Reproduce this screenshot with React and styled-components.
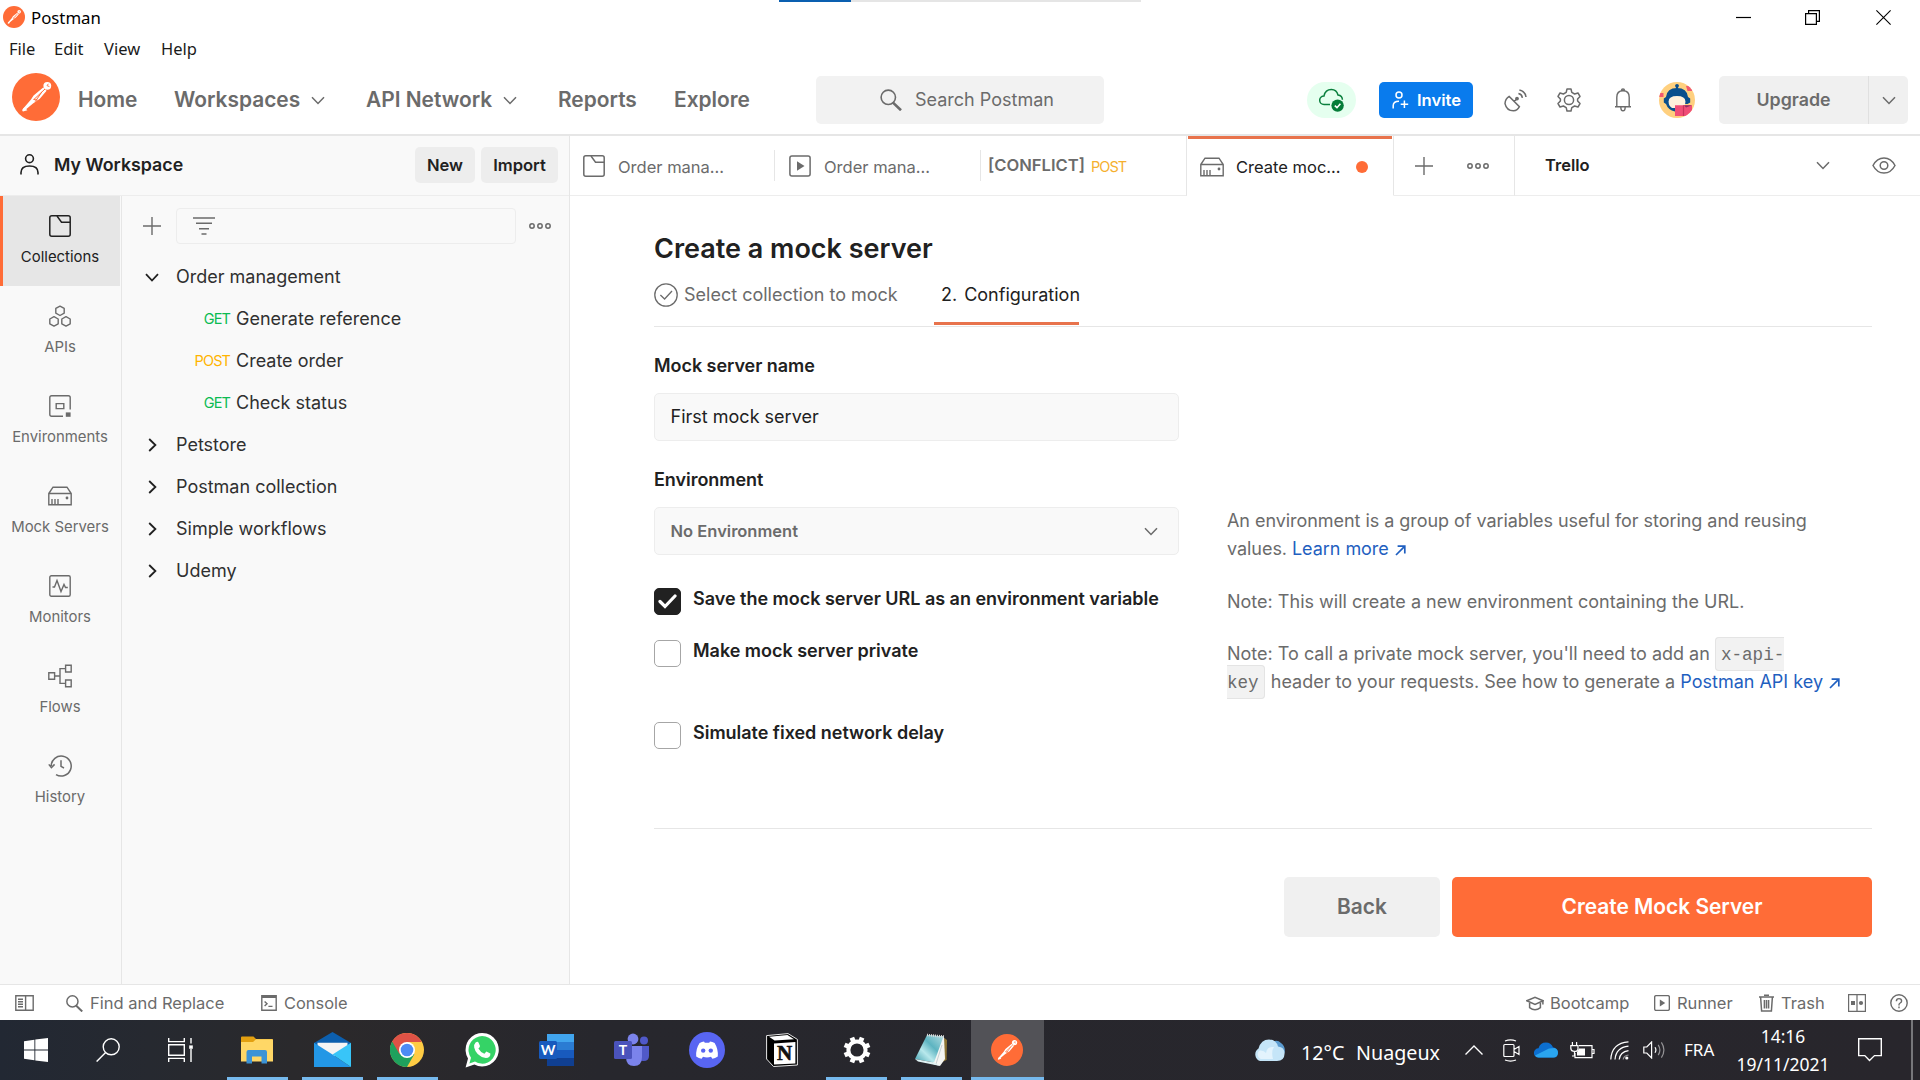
import React from "react";
import styled, { createGlobalStyle, css } from "styled-components";

const Global = createGlobalStyle`
  * { box-sizing: border-box; }
  html, body { margin: 0; padding: 0; background: #fff; }
  body { font-family: Inter, "Liberation Sans", sans-serif; color: #212121; overflow: hidden; }
  svg { display: block; flex: none; }
  button { font: inherit; border: 0; padding: 0; margin: 0; color: inherit; }
`;

const system = `"Noto Sans", "Open Sans", sans-serif`;
const gray = "#6b6b6b";
const line = "#ededed";

const Window = styled.div`
  width: 1920px;
  height: 1080px;
  display: flex;
  flex-direction: column;
  background: #fff;
  overflow: hidden;
`;

/* ---------- text ---------- */
const Label = styled.span`
  white-space: pre;
  font-size: ${(p) => p.$size || 18}px;
  font-weight: ${(p) => p.$weight || 400};
  color: ${(p) => p.$color || "inherit"};
  letter-spacing: ${(p) => p.$ls || 0}px;
  line-height: ${(p) => p.$lh || 24}px;
  padding-top: ${(p) => p.$pt || 0}px;
  padding-bottom: ${(p) => p.$pb || 0}px;
  ${(p) => p.$system && css`font-family: ${system};`}
`;

/* ---------- slots ---------- */
const Slot = styled.div`
  display: flex;
  align-items: center;
  flex: none;
  width: ${(p) => p.$w}px;
  height: 100%;
  justify-content: ${(p) => (p.$center ? "center" : "flex-start")};
`;

/* ---------- title bar ---------- */
const LoadBar = styled.div`
  position: absolute;
  top: 0;
  left: 779px;
  width: 362px;
  height: 2px;
  background: linear-gradient(to right, #0a5fb0 72px, #e5e5e5 72px);
`;
const TitleBar = styled.div`
  height: 34px;
  flex: none;
  display: flex;
  align-items: center;
  padding-left: 3px;
  color: #000;
`;
const WindowButtons = styled.div`
  margin-left: auto;
  display: flex;
  width: 211px;
  height: 33px;
  align-items: center;
`;
const MenuBar = styled.div`
  height: 30px;
  flex: none;
  display: flex;
  align-items: center;
  padding-left: 9px;
  color: #1a1a1a;
`;

/* ---------- header ---------- */
const Header = styled.header`
  height: 72px;
  flex: none;
  display: flex;
  align-items: center;
  padding-left: 12px;
  padding-top: 2px;
  border-bottom: 2px solid #e6e6e6;
  color: ${gray};
`;
const LogoBox = styled.div`
  width: 66px;
  padding-bottom: 7px;
  flex: none;
`;
const SearchBox = styled.div`
  width: 288px;
  height: 48px;
  flex: none;
  background: #f2f2f2;
  border-radius: 5px;
  display: flex;
  align-items: center;
  padding-left: 64px;
  gap: 13px;
`;
const SyncPill = styled.div`
  width: 49px;
  height: 36px;
  margin-left: 203px;
  margin-right: 23px;
  border-radius: 18px;
  background: #e5ffef;
  display: flex;
  align-items: center;
  justify-content: center;
  flex: none;
`;
const InviteButton = styled.button`
  width: 94px;
  height: 36px;
  flex: none;
  background: #097bed;
  color: #fff;
  border-radius: 5px;
  display: flex;
  align-items: center;
  padding-left: 13px;
  gap: 8px;
`;
const HeaderIcons = styled.div`
  display: flex;
  align-items: center;
  padding-left: 31px;
  width: 246px;
  flex: none;
`;
const UpgradeButton = styled.div`
  width: 189px;
  height: 48px;
  flex: none;
  display: flex;
  background: #f0f0f0;
  border-radius: 5px;
`;
const UpgradeMain = styled.div`
  width: 150px;
  display: flex;
  align-items: center;
  justify-content: center;
  border-right: 1px solid #e0e0e0;
`;
const UpgradeArrow = styled.div`
  width: 39px;
  display: flex;
  align-items: center;
  justify-content: center;
`;

/* ---------- body ---------- */
const Body = styled.div`
  height: 848px;
  flex: none;
  display: flex;
`;
const Sidebar = styled.aside`
  width: 570px;
  flex: none;
  background: #f9f9f9;
  border-right: 1px solid #e6e6e6;
  display: flex;
  flex-direction: column;
`;
const WorkspaceBar = styled.div`
  height: 60px;
  flex: none;
  display: flex;
  align-items: center;
  padding: 0 11px 2px 20px;
  border-bottom: 1px solid ${line};
`;
const SmallButton = styled.button`
  width: ${(p) => p.$w}px;
  height: 36px;
  margin-left: 6px;
  border-radius: 5px;
  background: #ededed;
`;
const SideColumns = styled.div`
  display: flex;
  flex: 1;
`;
const Rail = styled.nav`
  width: 122px;
  border-right: 1px solid #e6e6e6;
  flex: none;
`;
const RailItem = styled.div`
  height: 90px;
  width: 120px;
  display: flex;
  flex-direction: column;
  align-items: center;
  padding-top: 18px;
  gap: 7px;
  color: ${(p) => (p.$active ? "#212121" : gray)};
  ${(p) => p.$active && css`background: #e6e6e6; box-shadow: inset 3px 0 #ff6c37;`}
`;
const RailGlyph = styled.div`
  height: 24px;
  display: flex;
  align-items: center;
`;
const Explorer = styled.div`
  flex: 1;
  display: flex;
  flex-direction: column;
`;
const FilterRow = styled.div`
  height: 60px;
  display: flex;
  align-items: center;
  padding-left: 21px;
  color: ${gray};
`;
const FilterBox = styled.div`
  width: 340px;
  height: 36px;
  margin-left: 15px;
  margin-right: 13px;
  border: 1px solid ${line};
  border-radius: 4px;
  display: flex;
  align-items: center;
  padding-left: 16px;
`;
const TreeRow = styled.div`
  height: 42px;
  display: flex;
  align-items: center;
  color: #303030;
`;
const TreeToggle = styled.div`
  width: 54px;
  padding-left: ${(p) => (p.$open ? 23 : 26)}px;
  color: #212121;
`;
const Method = styled.div`
  width: 108px;
  margin-right: 6px;
  text-align: right;
  line-height: 20px;
  font-size: 14.5px;
  letter-spacing: -0.9px;
  color: ${(p) => (p.$kind === "GET" ? "#0cbb52" : "#ffb400")};
`;

/* ---------- main ---------- */
const Main = styled.main`
  flex: 1;
  display: flex;
  flex-direction: column;
`;
const Tabs = styled.div`
  height: 60px;
  flex: none;
  display: flex;
  color: ${gray};
`;
const Tab = styled.div`
  width: ${(p) => p.$w}px;
  flex: none;
  display: flex;
  align-items: center;
  padding-left: ${(p) => p.$pl}px;
  gap: ${(p) => p.$gap ?? 13}px;
  border-bottom: 1px solid ${line};
  ${(p) => p.$edge && css`border-right: 1px solid #e6e6e6;`}
  ${(p) => p.$active && css`
    border-bottom-color: #fff;
    background: linear-gradient(#e8734c, #e8734c) 1px 0 / 204px 3px no-repeat;
    color: #212121;
    padding-top: 2px;
  `}
`;
const TabDivider = styled.div`
  width: 1px;
  flex: none;
  border-bottom: 1px solid ${line};
  background: linear-gradient(#fff 14px, #e6e6e6 14px, #e6e6e6 45px, #fff 45px);
`;
const MethodTag = styled.span`
  font-size: 14.5px;
  letter-spacing: -0.9px;
  line-height: 20px;
  padding-top: 3px;
  color: #f5b02e;
`;
const Dot = styled.div`
  width: 12px;
  height: 12px;
  border-radius: 50%;
  background: #ff6c37;
  margin-left: 3px;
`;
const Page = styled.section`
  flex: 1;
  padding: 33px 48px 0 84px;
  display: flex;
  flex-direction: column;
`;
const Title = styled.h1`
  margin: 0;
  height: 39px;
  font-size: 27px;
  font-weight: 600;
  line-height: 40px;
`;
const Steps = styled.div`
  height: 59px;
  flex: none;
  display: flex;
  border-bottom: 1px solid #e6e6e6;
`;
const Step = styled.div`
  height: 57px;
  display: flex;
  gap: ${(p) => p.$gap}px;
  width: ${(p) => p.$w}px;
  padding: 12px 0 15px ${(p) => p.$pl || 0}px;
  color: ${(p) => (p.$active ? "#212121" : gray)};
  align-items: center;
  ${(p) => p.$active && css`border-bottom: 3px solid #e8734c; padding-bottom: 12px;`}
`;
const FieldLabel = styled.div`
  font-size: 18px;
  font-weight: 600;
  line-height: 24px;
  letter-spacing: -0.05px;
  margin-top: ${(p) => p.$mt}px;
`;
const Field = styled.div`
  width: 525px;
  height: 48px;
  margin-top: 15px;
  border: 1px solid ${line};
  border-radius: 5px;
  background: #f9f9f9;
  display: flex;
  align-items: center;
  justify-content: space-between;
  padding: 0 20px 0 15.6px;
`;
const FormColumns = styled.div`
  display: flex;
  height: 501px;
  padding-top: 27px;
  flex: none;
`;
const FormLeft = styled.div`
  width: 573px;
`;
const FormRight = styled.div`
  padding-top: 153px;
  color: ${gray};
`;
const CheckRow = styled.div`
  display: flex;
  align-items: flex-start;
  gap: 12px;
  height: ${(p) => p.$h}px;
`;
const Checks = styled.div`
  padding-top: 33px;
`;
const Box = styled.div`
  width: 27px;
  height: 27px;
  border-radius: 5px;
  border: 1px solid ${(p) => (p.$on ? "#212121" : "#a6a6a6")};
  background: ${(p) => (p.$on ? "#212121" : "#fff")};
  display: flex;
  align-items: center;
  justify-content: center;
`;
const Para = styled.p`
  margin: 0 0 ${(p) => p.$mb}px;
  font-size: 18px;
  line-height: 28px;
  white-space: nowrap;
  letter-spacing: ${(p) => p.$ls ?? 0}px;
`;
const Link = styled.a`
  color: #1f5fc0;
  svg { display: inline-block; vertical-align: -1px; margin-left: 6px; }
`;
const Code = styled.code`
  font-family: "Liberation Mono", monospace;
  font-size: 17.6px;
  letter-spacing: 0;
  background: #f2f2f2;
  border: 1px solid #e4e4e4;
  border-radius: 4px;
  padding: 7px 5px 5px;
  margin: 0 1px 0 0;
  line-height: 20px;
`;
const Actions = styled.div`
  border-top: 1px solid #e6e6e6;
  padding-top: 48px;
  display: flex;
  justify-content: flex-end;
  gap: 12px;
`;
const Action = styled.button`
  width: ${(p) => p.$w}px;
  height: 60px;
  border-radius: 5px;
  background: ${(p) => (p.$primary ? "#ff6c37" : "#f0f0f0")};
  color: ${(p) => (p.$primary ? "#fff" : gray)};
`;

/* ---------- status bar ---------- */
const StatusBar = styled.footer`
  height: 36px;
  flex: none;
  border-top: 1px solid #e6e6e6;
  display: flex;
  align-items: center;
  justify-content: space-between;
  color: ${gray};
  padding: 1px 0 0 15px;
`;
const Group = styled.div`
  display: flex;
  align-items: center;
`;

/* ---------- taskbar ---------- */
const Taskbar = styled.div`
  height: 60px;
  flex: none;
  background: linear-gradient(to right, #222833 0, #262930 150px, #2b292b 330px, #27272d 600px, #28262c 1920px);
  display: flex;
  color: #fff;
`;
const TaskCell = styled.div`
  width: ${(p) => p.$w || 74.9}px;
  height: 60px;
  flex: none;
  display: flex;
  align-items: center;
  justify-content: center;
  margin-left: ${(p) => p.$gap || 0}px;
  ${(p) => p.$open && css`
    background: linear-gradient(#76b9ed, #76b9ed) center bottom / 61px 3px no-repeat;
  `}
  ${(p) => p.$active && css`
    background: linear-gradient(#76b9ed, #76b9ed) center bottom / 100% 3px no-repeat, #525257;
  `}
`;
const Tray = styled.div`
  margin-left: auto;
  display: flex;
  align-items: center;
  width: 667px;
`;
const Clock = styled.div`
  width: 118px;
  display: flex;
  flex-direction: column;
  align-items: center;
`;
const DesktopEdge = styled.div`
  width: 2px;
  height: 60px;
  margin-left: 13px;
  background: #77777b;
`;

/* ---------- icons ---------- */
const Icon = ({ w = 20, h = w, vb = `0 0 ${w} ${h}`, sw = 1.4, children }) => (
  <svg width={w} height={h} viewBox={vb} fill="none" stroke="currentColor" strokeWidth={sw}>
    {children}
  </svg>
);
const Down = ({ w = 14, sw = 1.5 }) => (
  <Icon w={w} h={9} vb="0 0 14 9" sw={sw}><path d="M1 1.2 7 7.5 13 1.2" /></Icon>
);
const Right = () => <Icon w={9} h={14} sw={1.8}><path d="M1.2 1 7.4 7 1.2 13" /></Icon>;
const Plus = () => <Icon w={18} sw={1.4}><path d="M9 0V18M0 9H18" /></Icon>;
const Dots = () => (
  <Icon w={22} h={8} sw={1.5}><circle cx="3" cy="4" r="2.2" /><circle cx="11" cy="4" r="2.2" /><circle cx="19" cy="4" r="2.2" /></Icon>
);
const CollectionIcon = () => (
  <Icon w={22} sw={1.5}>
    <rect x=".8" y=".8" width="20.4" height="20.4" rx="2" />
    <path d="M8 1 12.5 7.2H21" />
  </Icon>
);
const ServerIcon = () => (
  <Icon w={24} h={20} sw={1.4}>
    <path d="M.8 7.5 5 1.2H19L23.2 7.5V18.8H.8ZM.8 7.5H23.2M4 13V18.5M7 13V18.5M10 13V18.5" />
    <circle cx="19" cy="12" r="1.4" fill="currentColor" stroke="none" />
  </Icon>
);
const Muted = styled.div`
  color: ${gray};
`;
const PlaySquare = ({ w = 22 }) => (
  <Icon w={w} vb="0 0 22 22" sw={w < 20 ? 1.9 : 1.5}>
    <rect x=".9" y=".9" width="20.2" height="20.2" rx="2" />
    <path d="M8 6.3 15.5 11 8 15.7Z" fill="currentColor" stroke="none" />
  </Icon>
);
const ApisIcon = () => {
  const hex = (x, y) => `M${x} ${y - 4.7}L${x + 4.2} ${y - 2.4}V${y + 2.4}L${x} ${y + 4.7}L${x - 4.2} ${y + 2.4}V${y - 2.4}Z`;
  return <Icon w={22} sw={1.4}><path d={hex(11, 5.8) + hex(5, 16.4) + hex(17, 16.4)} strokeLinejoin="round" /></Icon>;
};
const EnvIcon = () => (
  <Icon w={22} sw={1.4}>
    <path d="M14 21.2H2.6Q.8 21.2 .8 19.4V2.6Q.8 .8 2.6 .8H19.4Q21.2 .8 21.2 2.6V14.5" />
    <path d="M7.2 8.6H14.8V13.6H7.2Z" />
    <rect x="16.8" y="17.4" width="4.8" height="4.4" fill="currentColor" stroke="none" />
  </Icon>
);
const MonitorIcon = () => (
  <Icon w={22} sw={1.4}>
    <rect x=".8" y=".8" width="20.4" height="20.4" rx="1.5" />
    <path d="M3.5 12H5.5L8 5.5 12 16.5 15 9.5 16.5 12.5H18.8" />
  </Icon>
);
const FlowsIcon = () => (
  <Icon w={24} h={24} sw={1.4}>
    <path d="M.8 8.8H6.6V15.2H.8ZM17.6 1.2H23.2V8H17.6ZM17.6 16H23.2V22.8H17.6ZM6.6 12H12M17.6 4.6H12V19.4H17.6" />
  </Icon>
);
const HistoryIcon = () => (
  <Icon w={24} h={22} sw={1.5}>
    <path d="M3.2 11A10 10 0 1 1 8 19.6M.8 9.4 3.4 12.6 6.6 9.4M13 5.2V11.4L16 13" />
  </Icon>
);
const UserIcon = () => (
  <Icon w={19} h={21} sw={1.6}><circle cx="9.5" cy="4.7" r="3.9" /><path d="M1 20.5V18.5Q1 12 9.5 12T18 18.5V20.5" /></Icon>
);
const SearchIcon = ({ w = 22 }) => (
  <Icon w={w} vb="0 0 22 22" sw={w < 20 ? 1.9 : 1.6}>
    <circle cx="8.3" cy="8.3" r="7.2" /><path d="M13 13.6 21 21.3" strokeWidth="2.6" />
  </Icon>
);
const Postman = ({ size = 48 }) => (
  <svg width={size} height={size} viewBox="0 0 48 48">
    <circle cx="24" cy="24" r="24" fill="#ff6c37" />
    <g fill="#fff">
      <circle cx="35.3" cy="12.8" r="3.9" />
      <path d="M31.2 14.6 34.6 17.8 27.8 25.8 21 30.4 12.6 37.4 10.4 36.6 19 26.6 21.6 22.6Z" />
      <path d="M12.4 34.2 15.4 37.2 11 38.6Q9.6 38 10.6 36.6Z" />
    </g>
    <path d="M33 16 22 26.4M30 18.8 23.2 28.6M21.4 26.4 25.6 27.2" stroke="#ff6c37" strokeWidth="1" fill="none" />
    <path d="M36.4 10.8 35 12.6 37.4 13.6" stroke="#ff6c37" strokeWidth=".9" fill="none" />
  </svg>
);
const SatelliteIcon = () => (
  <Icon w={23} h={23} sw={1.5}>
    <path d="M5.2 7.4A9 9 0 0 0 1 14.6Q2.6 21.8 9.4 21.8 13.6 21.4 15.4 17.6ZM10.3 12.5 13 9.8M14.4 4.6A5 5 0 0 1 18.4 8.8M15.4 1A8.4 8.4 0 0 1 22 8" />
    <circle cx="13" cy="9.6" r="1.9" fill="currentColor" stroke="none" />
  </Icon>
);
const GearIcon = () => (
  <Icon w={24} h={24} sw={1.5}>
    <path d="M10 1H14L14.8 4.4 17.6 6 21 5 23 8.4 20.6 11V13L23 15.6 21 19 17.6 18 14.8 19.6 14 23H10L9.2 19.6 6.4 18 3 19 1 15.6 3.4 13V11L1 8.4 3 5 6.4 6 9.2 4.4Z" strokeLinejoin="round" />
    <circle cx="12" cy="12" r="4.6" />
  </Icon>
);
const BellIcon = () => (
  <Icon w={18} h={24} sw={1.4}>
    <path d="M1 18.8H17M2.8 18.6V9.2Q2.8 2.8 9 2.8T15.2 9.2V18.6M6.8 19Q6.8 22.8 9 22.8T11.2 19M7.3 2.8Q7.6 1 9 1T10.7 2.8" />
  </Icon>
);
const Avatar = () => (
  <svg width="36" height="36" viewBox="0 0 36 36">
    <clipPath id="face"><circle cx="18" cy="18" r="18" /></clipPath>
    <g clipPath="url(#face)">
      <rect width="36" height="36" fill="#ffd07f" />
      <path d="M0 11H4.5V15H0ZM27 4H33V9H28.5Z" fill="#f2596f" />
      <path d="M18 3V8" stroke="#0a4f8c" strokeWidth="2" />
      <circle cx="18" cy="3.8" r="1.9" fill="#0a4f8c" />
      <path d="M7 15Q8 6 18 6T29 15L31.2 16.5V20.5L28.5 22H16V29.5Q9 28 7 22L4.8 20.5V16.5Z" fill="#0a4f8c" />
      <path d="M9.6 19.5Q9.6 14 18 14T26.4 19.5Q26.4 24 23 26H13Q9.6 24 9.6 19.5Z" fill="#fff1dc" />
      <path d="M16 23.3H33V34H16Z" fill="#f04d76" />
      <path d="M24.5 23.3V34" stroke="#c7335c" strokeWidth="1.2" />
      <path d="M25 23.3H33L27 25.6Z" fill="#8f2d63" />
    </g>
  </svg>
);
const CloudIcon = () => (
  <svg width="26" height="24" viewBox="0 0 26 24" fill="none">
    <path d="M11 16.5H5A4.3 4.3 0 0 1 5 7.9Q6.3 1.5 12.4 1.5 17.6 1.5 19 7 23.4 7.6 23.4 11.8" stroke="#0a7f3d" strokeWidth="1.5" />
    <circle cx="18.6" cy="17.6" r="6.2" fill="#067d39" />
    <path d="M15.8 17.6 18 19.7 21.4 15.8" stroke="#fff" strokeWidth="1.6" />
  </svg>
);
const InviteIcon = () => (
  <Icon w={17} h={18} sw={1.5}><circle cx="7" cy="4" r="3" /><path d="M1.2 17.5V14.6Q1.2 10.2 7 10.2M12.4 9.6V17M8.7 13.3H16.2" /></Icon>
);
const FilterIcon = () => <Icon w={22} h={18} sw={1.6}><path d="M0 1H22M3 6.3H19M6 11.7H16M8.5 17H13.5" /></Icon>;
const EyeIcon = () => (
  <Icon w={24} h={17} sw={1.5}><path d="M1 8.5Q5 1 12 1T23 8.5Q19 16 12 16T1 8.5Z" /><circle cx="12" cy="8.5" r="3.8" /></Icon>
);
const Arrow = () => <Icon w={11} h={11} sw={1.7}><path d="M1 10 9.6 1.4M2.6 1.2H9.8V8.6" /></Icon>;

const PanelIcon = () => <Icon w={19} h={16} sw={1.4}><path d="M.8 .8H18.2V15.2H.8ZM10.6 1V15M3 4.3H8M3 6.8H8M3 9.3H8M3 11.8H8" /></Icon>;
const ConsoleIcon = () => (
  <Icon w={16} sw={1.4}><path d="M.8 .8H15.2V15.2H.8ZM3.6 6.6 6 8.8 3.6 11M7.4 11.4H11.5" /><path d="M1 2H15" strokeWidth="2" /></Icon>
);
const BootcampIcon = () => (
  <Icon w={18} h={15} sw={1.5}><path d="M.8 4.8 9 1.2 17.2 4.8 9 8.4ZM3.6 6.2V11.6Q9 15.8 14.4 11.6V6.2M16.9 5V8.5" /></Icon>
);
const TrashIcon = () => <Icon w={15} h={18} sw={1.5}><path d="M0 3H15M5 1.2H10M1.6 3 2.6 17H12.4L13.4 3M5.4 6V14.4M7.5 6V14.4M9.6 6V14.4" /></Icon>;
const TwoPaneIcon = () => (
  <Icon w={18} h={18} sw={1.2}>
    <path d="M.6 .6H17.4V17.4H.6ZM9 .8V17.2" />
    <path d="M3 7H7V11H3Z" fill="currentColor" stroke="none" /><circle cx="13" cy="9" r="2.1" fill="currentColor" stroke="none" />
  </Icon>
);
const HelpIcon = () => (
  <Icon w={18} sw={1.4}><circle cx="9" cy="9" r="8.2" /><path d="M6.4 7.2Q6.4 4.6 9 4.6T11.6 7Q11.6 8.2 10.2 9T9 10.8V11.4M9 12.6V14.2" /></Icon>
);

const WindowsLogo = () => <svg width="24" height="24" viewBox="0 0 24 24" fill="#fff"><path d="M0 3.3 10.4 1.7V11.4H0ZM11.3 1.5 24 0V11.4H11.3ZM0 12.4H10.4V22.2L0 20.7ZM11.3 12.4H24V24L11.3 22.4Z" /></svg>;
const FolderLogo = () => (
  <svg width="32" height="28" viewBox="0 0 32 28">
    <path d="M0 1.5Q0 .5 1 .5H12.5L15 3H31Q32 3 32 4V12H0Z" fill="#e3a010" />
    <path d="M0 6H12L15 3.2H31Q32 3.2 32 4.2V25.5H0Z" fill="#ffd766" />
    <path d="M5.5 16Q5.5 14 7.5 14H24Q26 14 26 16V27.5H20.5V20.5H11V27.5H5.5Z" fill="#3c93d6" />
  </svg>
);
const MailLogo = () => (
  <svg width="37" height="36" viewBox="0 0 37 36">
    <path d="M0 11 18.5 0 37 11V20H0Z" fill="#0c5fae" />
    <path d="M3.5 10.8H33.5V20L18.5 25 3.5 20Z" fill="#f4f4f4" />
    <path d="M0 10.8 18.5 22.5 37 35H0Z" fill="#2397e6" />
    <path d="M37 10.8V35L18.5 22.5Z" fill="#38c5f8" />
  </svg>
);
const ChromeLogo = () => (
  <svg width="34" height="34" viewBox="0 0 34 34">
    <circle cx="17" cy="17" r="17" fill="#fc4" />
    <path d="M17 17 2.2 8.5A17 17 0 0 0 17 34L24.3 21.2Z" fill="#1fa15d" />
    <path d="M2.2 8.5A17 17 0 0 1 31.8 9H17L9.6 21.2Z" fill="#de5246" />
    <circle cx="17" cy="17" r="8" fill="#fff" /><circle cx="17" cy="17" r="6.3" fill="#4c8bf5" />
  </svg>
);
const WhatsAppLogo = () => (
  <svg width="34" height="36" viewBox="0 0 34 36">
    <path d="M.6 35.4 3 26.5A16.6 16.8 0 1 1 9.4 32.6Z" fill="#fff" />
    <path d="M4.4 31.6 6 25.8A13.6 13.8 0 1 1 10 29.6Z" fill="#35d366" />
    <path d="M10.6 10.6Q12.8 9 13.6 10.8L15 14Q15 15 13.4 16.6 15.4 20.4 19.4 21.8L21.4 19.6 25.4 21.6Q25.6 26 20.8 26 11 24 9.2 15.4 8.8 12.4 10.6 10.6Z" fill="#fff" />
  </svg>
);
const WordLogo = () => (
  <svg width="36" height="34" viewBox="0 0 36 34">
    <path d="M8 1H35V9H8Z" fill="#41a5ee" /><path d="M8 9H35V17H8Z" fill="#2b7cd3" /><path d="M8 17H35V25H8Z" fill="#185abd" /><path d="M8 25H35V33H8Z" fill="#103f91" />
    <rect y="8" width="18" height="18" rx="1.5" fill="#185abd" />
    <text x="9" y="22" fontSize="14" fontWeight="700" textAnchor="middle" fill="#fff" fontFamily="Lato, sans-serif">W</text>
  </svg>
);
const TeamsLogo = () => (
  <svg width="36" height="34" viewBox="0 0 36 34">
    <circle cx="30" cy="7.5" r="4" fill="#5059c9" /><circle cx="19" cy="6" r="5.4" fill="#7b83eb" />
    <path d="M24 13H35V23Q35 28 29.5 28T24 24Z" fill="#5059c9" />
    <path d="M12 13H28V24Q28 33 20 33T12 24Z" fill="#7b83eb" />
    <rect y="8" width="18" height="18" rx="1.5" fill="#4b53bc" />
    <text x="9" y="22" fontSize="14" fontWeight="700" textAnchor="middle" fill="#fff" fontFamily="Lato, sans-serif">T</text>
  </svg>
);
const DiscordLogo = () => (
  <svg width="36" height="36" viewBox="0 0 36 36">
    <circle cx="18" cy="18" r="18" fill="#5865f2" />
    <path d="M10.6 11Q13 9.6 15 9.4L15.8 10.8H20.2L21 9.4Q23.4 9.6 25.6 11 29.4 17 28.8 24.4 26 26.4 23.4 26.8L22 24.8Q18 26 14 24.8L12.6 26.8Q9.8 26.4 7.2 24.4 6.6 17 10.6 11Z" fill="#fff" />
    <circle cx="14.2" cy="18.6" r="2.2" fill="#5865f2" /><circle cx="21.8" cy="18.6" r="2.2" fill="#5865f2" />
  </svg>
);
const NotionLogo = () => (
  <svg width="32" height="34" viewBox="0 0 32 34">
    <path d="M.6 2.6 22 .6 31.4 6.4V32L7.5 33.5.6 26Z" fill="#000" stroke="#fff" strokeWidth=".9" />
    <path d="M3 3.8 21.5 2 28 6.2 8.6 7.4Z" fill="#fff" />
    <path d="M8 10.4 29.4 9V30.4L8 31.6Z" fill="#fff" />
    <text x="18.7" y="27.4" fontSize="21" fontWeight="700" textAnchor="middle" fill="#111" stroke="#111" strokeWidth=".6" fontFamily="Liberation Serif, serif">N</text>
  </svg>
);
const SettingsLogo = () => (
  <svg width="28" height="28" viewBox="0 0 28 28" fill="none" stroke="#fff">
    <circle cx="14" cy="14" r="8.6" strokeWidth="4" />
    {[22.5, 67.5, 112.5, 157.5, 202.5, 247.5, 292.5, 337.5].map((a) => (
      <path key={a} d="M14 0.6V4.6" strokeWidth="4.8" transform={`rotate(${a} 14 14)`} />
    ))}
  </svg>
);
const NotepadLogo = () => (
  <svg width="34" height="34" viewBox="0 0 34 34">
    <defs>
      <linearGradient id="cover" x1="0" y1="1" x2="1" y2="0">
        <stop offset="0" stopColor="#3f9fae" /><stop offset=".35" stopColor="#b8e8ec" />
        <stop offset=".6" stopColor="#5db4c1" /><stop offset="1" stopColor="#b4dde2" />
      </linearGradient>
    </defs>
    <path d="M29 4 33 7 32.6 27 28 29Z" fill="#8d7434" />
    <path d="M13 2 30 3.5 31 26 26 33 19 31Z" fill="#f4f5f3" />
    <path d="M28 12 22 31M25.4 12 18 30" stroke="#bcc7ca" strokeWidth=".8" />
    <path d="M13 2 29.5 3.5 20 29.5 1 26Z" fill="url(#cover)" />
    <path d="M1 26 20 29.5 26 33 4 28.4Z" fill="#dff1f3" />
    <path d="M13 2 30 3.6" stroke="#dadada" strokeWidth="2.6" strokeDasharray="1 1" />
  </svg>
);
const WeatherIcon = () => (
  <svg width="32" height="23" viewBox="0 0 32 23">
    <path d="M20 3Q24 0 28 4 33 8 31.5 14L24 12Z" fill="#5b9bd0" />
    <path d="M7 22A7 7 0 0 1 5.5 9.5Q8 .5 16 .5 23 .5 25 7.4 31.6 8 31.6 14.6 31.4 22 24 22Z" fill="#c5e5f8" />
    <path d="M8 20A5 5 0 0 1 6.5 11.5Q11 11 13 14 14 7 21 8 18 12 20 20Z" fill="#e3f3fd" />
  </svg>
);
const MeetIcon = () => (
  <Icon w={17} h={23} sw={1.2}><path d="M.8 6.5Q.8 5.5 1.8 5.5H10Q11 5.5 11 6.5V16.5Q11 17.5 10 17.5H1.8Q.8 17.5 .8 16.5ZM11 10.5 16 7.5V15.5L11 12.5M2 2Q7.5-.2 13 2M2 21Q7.5 23.2 13 21" /></Icon>
);
const OneDriveIcon = () => (
  <svg width="24" height="16" viewBox="0 0 24 16">
    <path d="M4.5 15.5A4.6 4.6 0 0 1 4.5 6.3Q6 .5 12 .5 17 .5 19 5.2 24 6.5 24 10.8 23.6 15.5 19.5 15.5Z" fill="#0c6fd0" />
    <path d="M4.5 15.5Q2 15.2 1 13.4L15 6.6 20.5 6Q24 7.2 24 11 23.4 15.5 19.5 15.5Z" fill="#2aa5ef" />
  </svg>
);
const BatteryIcon = () => (
  <Icon w={25} h={17} sw={1.2}>
    <path d="M9 3.6H22V15.6H5V11M22.3 7.5H24V11.5H22.3M2.4 0V3.5M6.6 0V3.5M.8 3.6H8V6.4Q8 9.4 4.5 9.4T.8 6.4ZM4.5 9.4V14H2" />
    <path d="M9 6.5H15V13.5H7V10Z" fill="#fff" stroke="none" />
  </Icon>
);
const WifiIcon = () => (
  <Icon w={19} h={19} sw={1.2}>
    <path d="M.8 18.5Q1.6 2 18.5 .8M5 18.5Q6 6.5 18.5 5.2M9.2 18.5Q10 10.8 18.5 9.6" />
    <path d="M13.2 18.5Q13.8 14.6 18.5 14" opacity=".5" /><circle cx="16.8" cy="17" r="1.6" fill="#fff" stroke="none" />
  </Icon>
);
const SoundIcon = () => (
  <Icon w={23} h={18} sw={1.2}>
    <path d="M.8 6H3.8L8.6 1V17L3.8 12H.8ZM12 6.2Q13.8 9 12 11.8" />
    <path d="M15.2 3.8Q18.6 9 15.2 14.2M18.4 1.4Q23.4 9 18.4 16.6" opacity=".5" />
  </Icon>
);

/* ---------- data ---------- */
const nav = [
  { text: "Home", w: 96 },
  { text: "Workspaces", w: 192, menu: 137 },
  { text: "API Network", w: 192, menu: 137 },
  { text: "Reports", w: 116 },
  { text: "Explore", w: 142 },
];
const rail = [
  ["Collections", CollectionIcon], ["APIs", ApisIcon], ["Environments", EnvIcon], ["Mock Servers", ServerIcon],
  ["Monitors", MonitorIcon], ["Flows", FlowsIcon], ["History", HistoryIcon],
];
const tree = [
  { text: "Order management", open: true },
  { text: "Generate reference", method: "GET" },
  { text: "Create order", method: "POST" },
  { text: "Check status", method: "GET" },
  { text: "Petstore" }, { text: "Postman collection" }, { text: "Simple workflows" }, { text: "Udemy" },
];
const apps = [
  { icon: FolderLogo, open: true, gap: 4 }, { icon: MailLogo, open: true }, { icon: ChromeLogo, open: true },
  { icon: WhatsAppLogo }, { icon: WordLogo }, { icon: TeamsLogo }, { icon: DiscordLogo }, { icon: NotionLogo },
  { icon: SettingsLogo, open: true }, { icon: NotepadLogo, open: true },
];

export default function App() {
  return (
    <Window>
      <Global />
      <LoadBar />
      <TitleBar>
        <Slot $w={28}><Postman size={22} /></Slot>
        <Label $system $size={16.8} $pt={1}>Postman</Label>
        <WindowButtons>
          <Slot $w={68} $center><Icon w={15} h={15} sw={1.2}><path d="M0 7.5H15" /></Icon></Slot>
          <Slot $w={71} $center><Icon w={15} h={15} sw={1.2}><path d="M.6 3.6H11.4V14.4H.6ZM3.6 3.6V.6H14.4V11.4H11.4" /></Icon></Slot>
          <Slot $w={71} $center><Icon w={15} h={15} sw={1.1}><path d="M.4 .4 14.6 14.6M14.6 .4 .4 14.6" /></Icon></Slot>
        </WindowButtons>
      </TitleBar>
      <MenuBar>
        {[["File", 45], ["Edit", 50], ["View", 57], ["Help", 60]].map(([t, w]) => (
          <Slot key={t} $w={w}><Label $system $size={16.5}>{t}</Label></Slot>
        ))}
      </MenuBar>

      <Header>
        <LogoBox><Postman /></LogoBox>
        {nav.map((n) => (
          <Slot key={n.text} $w={n.w}>
            {n.menu ? <Slot $w={n.menu}><Label $size={20.9} $weight={600}>{n.text}</Label></Slot> : <Label $size={20.9} $weight={600}>{n.text}</Label>}
            {n.menu && <Down />}
          </Slot>
        ))}
        <SearchBox>
          <SearchIcon />
          <Label>Search Postman</Label>
        </SearchBox>
        <SyncPill><CloudIcon /></SyncPill>
        <InviteButton><InviteIcon /><Label $weight={600} $size={16.6}>Invite</Label></InviteButton>
        <HeaderIcons>
          <Slot $w={53}><SatelliteIcon /></Slot>
          <Slot $w={57}><GearIcon /></Slot>
          <Slot $w={45}><BellIcon /></Slot>
          <Avatar />
        </HeaderIcons>
        <UpgradeButton>
          <UpgradeMain><Label $weight={600} $size={17.8}>Upgrade</Label></UpgradeMain>
          <UpgradeArrow><Down /></UpgradeArrow>
        </UpgradeButton>
      </Header>

      <Body>
        <Sidebar>
          <WorkspaceBar>
            <Slot $w={34}><UserIcon /></Slot>
            <Slot $w={355}><Label $weight={600} $size={17.8}>My Workspace</Label></Slot>
            <SmallButton $w={60}><Label $weight={600} $size={16.6}>New</Label></SmallButton>
            <SmallButton $w={77}><Label $weight={600} $size={16.6}>Import</Label></SmallButton>
          </WorkspaceBar>
          <SideColumns>
            <Rail>
              {rail.map(([name, Glyph], i) => (
                <RailItem key={name} $active={i === 0}>
                  <RailGlyph><Glyph /></RailGlyph>
                  <Label $size={14.9}>{name}</Label>
                </RailItem>
              ))}
            </Rail>
            <Explorer>
              <FilterRow>
                <Plus />
                <FilterBox><FilterIcon /></FilterBox>
                <Dots />
              </FilterRow>
              {tree.map((t) => (
                <TreeRow key={t.text}>
                  {t.method ? <Method $kind={t.method}>{t.method}</Method> : <TreeToggle $open={t.open}>{t.open ? <Down sw={1.8} /> : <Right />}</TreeToggle>}
                  <Label>{t.text}</Label>
                </TreeRow>
              ))}
            </Explorer>
          </SideColumns>
        </Sidebar>

        <Main>
          <Tabs>
            <Tab $w={204} $pl={13}><CollectionIcon /><Label $size={16.5} $pt={2}>Order mana...</Label></Tab>
            <TabDivider />
            <Tab $w={205} $pl={14}><PlaySquare /><Label $size={16.5} $pt={2}>Order mana...</Label></Tab>
            <TabDivider />
            <Tab $w={206} $pl={7} $gap={6} $edge><Label $weight={600} $size={16.6} $pb={2}>[CONFLICT]</Label><MethodTag>POST</MethodTag></Tab>
            <Tab $w={207} $pl={13} $edge $active $gap={12}><Muted><ServerIcon /></Muted><Label $size={16.5} $pt={1}>Create moc...</Label><Dot /></Tab>
            <Tab $w={121} $pl={21} $gap={34} $edge><Plus /><Dots /></Tab>
            <Tab $w={405} $pl={30} $gap={0}>
              <Slot $w={271}><Label $weight={600} $size={16.5} $pb={2} $color="#212121">Trello</Label></Slot>
              <Slot $w={56}><Down /></Slot>
              <EyeIcon />
            </Tab>
          </Tabs>
          <Page>
            <Title>Create a mock server</Title>
            <Steps>
              <Step $w={280} $gap={6}>
                <Icon w={24} h={24} sw={1.3}><circle cx="12" cy="12" r="11.2" /><path d="M6.4 12 10.6 16 18 8" /></Icon>
                <Label>Select collection to mock</Label>
              </Step>
              <Step $w={145} $pl={7} $gap={7} $active><Label>2.</Label><Label>Configuration</Label></Step>
            </Steps>
            <FormColumns>
              <FormLeft>
                <FieldLabel $mt={0}>Mock server name</FieldLabel>
                <Field><Label>First mock server</Label></Field>
                <FieldLabel $mt={27}>Environment</FieldLabel>
                <Field><Label $weight={600} $color={gray} $size={16.5}>No Environment</Label><Muted><Down /></Muted></Field>
                <Checks>
                  <CheckRow $h={52}>
                    <Box $on><svg width="19" height="15" viewBox="0 0 19 15" fill="none"><path d="M2 7.5 7 12.5 17 2" stroke="#fff" strokeWidth="3.2" strokeLinecap="round" /></svg></Box>
                    <Label $weight={600} $lh={22} $ls={-0.02}>Save the mock server URL as an environment variable</Label>
                  </CheckRow>
                  <CheckRow $h={82}><Box /><Label $weight={600} $lh={22} $ls={-0.02}>Make mock server private</Label></CheckRow>
                  <CheckRow $h={30}><Box /><Label $weight={600} $lh={22} $ls={-0.02}>Simulate fixed network delay</Label></CheckRow>
                </Checks>
              </FormLeft>
              <FormRight>
                <Para $mb={25} $ls={-0.05}>
                  An environment is a group of variables useful for storing and reusing<br />
                  values. <Link>Learn more<Arrow /></Link>
                </Para>
                <Para $mb={24} $ls={0.01}>Note: This will create a new environment containing the URL.</Para>
                <Para $mb={0} $ls={0}>
                  Note: To call a private mock server, you'll need to add an <Code>x-api-<br />key</Code> header to your requests. See how to generate a <Link>Postman API key<Arrow /></Link>
                </Para>
              </FormRight>
            </FormColumns>
            <Actions>
              <Action $w={156}><Label $size={20.9} $weight={600}>Back</Label></Action>
              <Action $w={420} $primary><Label $size={20.9} $weight={600}>Create Mock Server</Label></Action>
            </Actions>
          </Page>
        </Main>
      </Body>

      <StatusBar>
        <Group>
          <Slot $w={51}><PanelIcon /></Slot>
          <Slot $w={24}><SearchIcon w={17} /></Slot>
          <Slot $w={171}><Label $size={16.5}>Find and Replace</Label></Slot>
          <Slot $w={23}><ConsoleIcon /></Slot>
          <Label $size={16.4}>Console</Label>
        </Group>
        <Group>
          <Slot $w={24}><BootcampIcon /></Slot>
          <Slot $w={104}><Label $size={16.5}>Bootcamp</Label></Slot>
          <Slot $w={23}><PlaySquare w={16} /></Slot>
          <Slot $w={82}><Label $size={16.5}>Runner</Label></Slot>
          <Slot $w={22}><TrashIcon /></Slot>
          <Slot $w={67}><Label $size={16.5}>Trash</Label></Slot>
          <Slot $w={42}><TwoPaneIcon /></Slot>
          <Slot $w={30}><HelpIcon /></Slot>
        </Group>
      </StatusBar>

      <Taskbar>
        <TaskCell $w={72}><WindowsLogo /></TaskCell>
        <TaskCell $w={72}><Icon w={24} h={24} sw={1.4}><circle cx="15.2" cy="8.8" r="8" /><path d="M9.6 14.6 .6 23.6" /></Icon></TaskCell>
        <TaskCell $w={72}><Icon w={25} h={24} sw={1.4}><path d="M.7 0V3.6H16.3V0M.7 24V20.4H16.3V24M.7 6.7H16.3V17.3H.7ZM23 0V5.4M23 11V24" /><path d="M21.2 7.4H24.8V10.8H21.2Z" fill="#fff" stroke="none" /></Icon></TaskCell>
        {apps.map(({ icon: Glyph, open, gap }, i) => (
          <TaskCell key={i} $open={open} $gap={gap}><Glyph /></TaskCell>
        ))}
        <TaskCell $w={73} $gap={2} $active><Postman size={32} /></TaskCell>
        <Tray>
          <Slot $w={48}><WeatherIcon /></Slot>
          <Slot $w={55}><Label $system $size={19.7} $pt={5}>12°C</Label></Slot>
          <Slot $w={109}><Label $system $size={19.7} $pt={5}>Nuageux</Label></Slot>
          <Slot $w={38}><Icon w={18} h={10} sw={1.4}><path d="M.5 9.5 9 1 17.5 9.5" /></Icon></Slot>
          <Slot $w={31}><MeetIcon /></Slot>
          <Slot $w={36}><OneDriveIcon /></Slot>
          <Slot $w={40}><BatteryIcon /></Slot>
          <Slot $w={33}><WifiIcon /></Slot>
          <Slot $w={41}><SoundIcon /></Slot>
          <Slot $w={40}><Label $system $size={17}>FRA</Label></Slot>
          <Clock><Label $system $size={17.4} $lh={28}>14:16</Label><Label $system $size={17.5} $lh={28}>19/11/2021</Label></Clock>
          <Slot $w={56} $center><Icon w={24} h={24} sw={1.4}><path d="M.7 .7H23.3V17.6H16.5L11.5 22.6 6.8 17.6H.7Z" /></Icon></Slot>
          <DesktopEdge />
        </Tray>
      </Taskbar>
    </Window>
  );
}
